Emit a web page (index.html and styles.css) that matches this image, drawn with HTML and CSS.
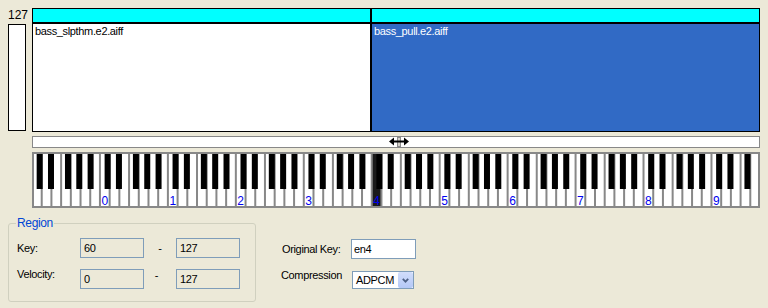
FILE: index.html
```html
<!DOCTYPE html>
<html lang="en">
<head>
  <meta charset="UTF-8">
  <title>Sample Map</title>
  <link rel="stylesheet" href="styles.css">
</head>
<body>
  <div class="editor">
    <div class="vel">
      <div class="vel-max">127</div>
      <div class="vel-bar"></div>
    </div>
    <div class="main">
      <div class="lanes">
        <div class="lane lane-left">
          <div class="lane-head"></div>
          <div class="lane-body">bass_slpthm.e2.aiff</div>
        </div>
        <div class="lane lane-sel">
          <div class="lane-head"></div>
          <div class="lane-body">bass_pull.e2.aiff</div>
        </div>
      </div>
      <div class="scroller">
        <svg class="grip" width="20" height="10" viewBox="0 0 20 10">
          <rect x="8.5" y="0.5" width="3" height="9" fill="#d4d0c8" stroke="#8c8c8c"/>
          <path d="M3 4.5 H17" stroke="#000" stroke-width="2"/>
          <path d="M0 4.5 L5 0.5 V8.5 Z M20 4.5 L15 0.5 V8.5 Z" fill="#000"/>
        </svg>
      </div>
      <div class="keyboard">
        <svg id="keys" width="728" height="56"></svg>
      </div>
    </div>
  </div>

  <div class="props">
    <fieldset class="region">
      <legend>Region</legend>
      <div class="row">
        <label>Key:</label>
        <input class="field" type="text" value="60" disabled>
        <span class="dash">-</span>
        <input class="field" type="text" value="127" disabled>
      </div>
      <div class="row row-top">
        <label>Velocity:</label>
        <input class="field" type="text" value="0" disabled>
        <span class="dash dash-up">-</span>
        <input class="field" type="text" value="127" disabled>
      </div>
    </fieldset>

    <div class="sample">
      <div class="row">
        <label>Original Key:</label>
        <input class="field field-key" type="text" value="en4">
      </div>
      <div class="row row-top">
        <label>Compression</label>
        <div class="select">
          <span class="select-value">ADPCM</span>
          <span class="select-btn">
            <svg width="7" height="5" viewBox="0 0 7 5"><path d="M0.8 0.8 L3.5 3.6 L6.2 0.8" fill="none" stroke="#4d6185" stroke-width="1.8"/></svg>
          </span>
        </div>
      </div>
    </div>
  </div>

  <script>
    const svg = document.getElementById('keys');
    const NS = 'http://www.w3.org/2000/svg';
    const W = 728, H = 56;
    const whiteW = W / 75;
    const octW = whiteW * 7;
    const selectedKey = 60;

    function rect(x, y, w, h, fill) {
      const r = document.createElementNS(NS, 'rect');
      r.setAttribute('x', x);
      r.setAttribute('y', y);
      r.setAttribute('width', w);
      r.setAttribute('height', h);
      r.setAttribute('fill', fill);
      svg.appendChild(r);
      return r;
    }

    // white background and the selected white key
    rect(0, 0, W, H, '#fff');
    const selIndex = Math.floor(selectedKey / 12) * 7;
    rect(selIndex * whiteW, 0, whiteW, H, '#1a1a1a');

    // separators between white keys
    for (let i = 1; i < 75; i++) {
      rect(i * whiteW - 1, 0, 2, H, '#888');
    }

    // black keys
    const blacks = [1, 3, 6, 8, 10];
    for (let key = 0; key < 128; key++) {
      const semi = key % 12;
      if (!blacks.includes(semi)) continue;
      const oct = Math.floor(key / 12);
      rect(oct * octW + semi * octW / 12 - 1, 0, 6, 37, '#000');
    }

    // octave numbers
    for (let n = 0; n <= 9; n++) {
      const t = document.createElementNS(NS, 'text');
      t.setAttribute('x', (n + 1) * octW + 1.5);
      t.setAttribute('y', 53);
      t.setAttribute('class', 'oct');
      t.textContent = n;
      svg.appendChild(t);
    }

    // outline
    const frame = rect(1, 1, W - 2, H - 2, 'none');
    frame.setAttribute('stroke', '#888');
    frame.setAttribute('stroke-width', 2);
  </script>
</body>
</html>
```

FILE: styles.css
```css
/* Global */
body {
  margin: 0;
  background-color: #ece9d8;
  color: #000;
  font-family: "Liberation Sans", Arial, sans-serif;
  font-size: 11px;
  letter-spacing: -0.35px;
}

/* Map editor */
.editor {
  display: flex;
  gap: 6px;
  padding: 8px 8px 0;
}

.vel {
  width: 18px;
  display: flex;
  flex-direction: column;
}

.vel-max {
  height: 16px;
  padding-top: 1px;
  box-sizing: border-box;
  line-height: 12px;
  font-size: 12px;
  letter-spacing: 0;
  text-align: right;
  margin-right: -2px;
}

.vel-bar {
  height: 107px;
  box-sizing: border-box;
  border: 1px solid #000;
  background-color: #fff;
}

.main {
  width: 728px;
}

.lanes {
  display: flex;
  height: 124px;
  box-sizing: border-box;
  border: 1px solid #000;
}

.lane {
  display: flex;
  flex-direction: column;
}

.lane-left {
  width: 337px;
}

.lane-sel {
  flex: 1;
  border-left: 2px solid #000;
}

.lane-head {
  height: 13px;
  background-color: #00ffff;
  border-bottom: 2px solid #000;
}

.lane-body {
  flex: 1;
  padding: 1px 2px;
  line-height: 13px;
  background-color: #fff;
}

.lane-sel .lane-body {
  background-color: #316ac5;
  color: #fff;
}

.scroller {
  margin-top: 4px;
  height: 12px;
  box-sizing: border-box;
  border: 1px solid #888;
  background-color: #fff;
  padding-left: 356px;
}

.grip {
  display: block;
}

.keyboard {
  margin-top: 4px;
  height: 56px;
}

.keyboard svg {
  display: block;
}

.oct {
  font-family: "Liberation Sans", Arial, sans-serif;
  font-size: 12px;
  letter-spacing: 0;
  fill: #0000f0;
}

/* Properties */
.props {
  display: flex;
  align-items: flex-start;
  padding: 0 8px;
  margin-top: 9px;
}

.region {
  width: 248px;
  box-sizing: border-box;
  margin: 0;
  padding: 8px 8px 12px;
  border: 1px solid #d0d0bf;
  border-radius: 3px;
}

.region legend {
  padding: 0 1px;
  margin-left: -1px;
  color: #0046d5;
  font-size: 12px;
  line-height: 13px;
}

.row {
  display: flex;
  align-items: center;
}

.row + .row {
  margin-top: 11px;
}

.row-top {
  align-items: flex-start;
}

.row label {
  width: 63px;
}

.row-top label {
  margin-top: -1px;
}

.field {
  width: 64px;
  height: 20px;
  box-sizing: border-box;
  margin: 0;
  padding: 0 3px;
  border: 1px solid #7f9db9;
  background-color: #ece9d8;
  color: #000;
  font-family: inherit;
  font-size: 11px;
  letter-spacing: inherit;
}

.dash {
  width: 32px;
  text-align: center;
}

.dash-up {
  width: 14px;
  margin-right: 18px;
  text-align: right;
}

.sample {
  margin-left: 25px;
  margin-top: 22px;
}

.sample label {
  width: 69px;
  margin-left: 1px;
}

.sample .row-top label {
  margin-left: 0;
  width: 71px;
}

.field-key {
  width: 65px;
  padding: 0 2px;
  background-color: #fff;
}

.select {
  display: flex;
  align-items: center;
  width: 62px;
  height: 18px;
  margin-top: 1px;
  box-sizing: border-box;
  border: 1px solid #7f9db9;
  background-color: #fff;
}

.select-value {
  flex: 1;
  padding-left: 3px;
}

.select-btn {
  display: flex;
  align-items: center;
  justify-content: center;
  width: 15px;
  height: 16px;
  border-radius: 2px;
  background: linear-gradient(#d1ddfb, #b4c8f6);
}
```
